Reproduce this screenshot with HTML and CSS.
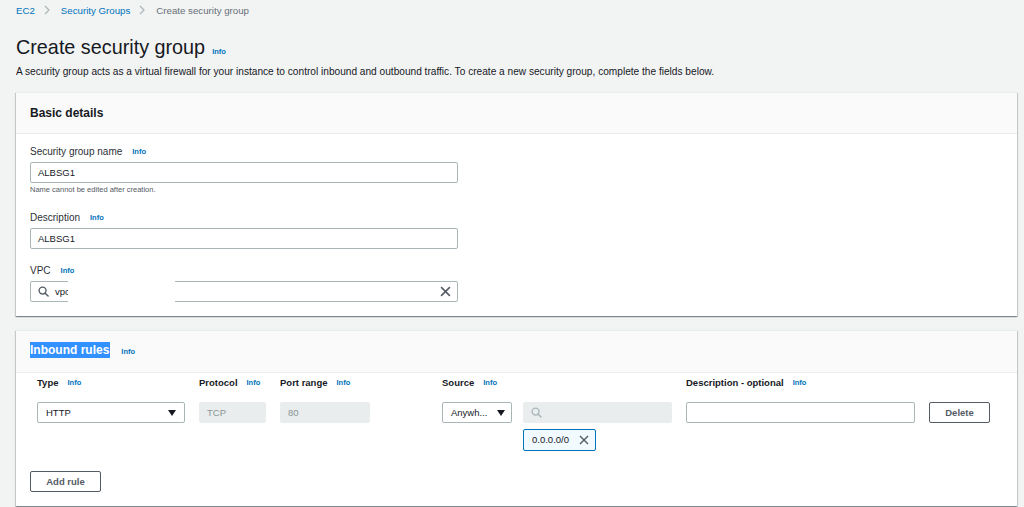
FILE: index.html
```html
<!DOCTYPE html>
<html lang="en">
<head>
<meta charset="utf-8">
<title>Create security group</title>
<link rel="stylesheet" href="styles.css">
</head>
<body>
<div class="page">
  <nav class="crumbs">
    <a class="crumb-link">EC2</a>
    <svg class="chev" width="6" height="10" viewBox="0 0 6 10"><path d="M1 1l4 4-4 4" fill="none" stroke="#aab7b8" stroke-width="1.2"/></svg>
    <a class="crumb-link">Security Groups</a>
    <svg class="chev" width="6" height="10" viewBox="0 0 6 10"><path d="M1 1l4 4-4 4" fill="none" stroke="#aab7b8" stroke-width="1.2"/></svg>
    <span class="crumb-current">Create security group</span>
  </nav>

  <div class="title-row">
    <h1 class="title">Create security group</h1>
    <a class="info">Info</a>
  </div>
  <p class="intro">A security group acts as a virtual firewall for your instance to control inbound and outbound traffic. To create a new security group, complete the fields below.</p>

  <section class="card card-basic">
    <header class="card-head">
      <h2 class="card-title">Basic details</h2>
    </header>
    <div class="card-body">
      <div class="field">
        <div class="label">Security group name <a class="info">Info</a></div>
        <div class="input"><span class="value">ALBSG1</span></div>
        <div class="hint">Name cannot be edited after creation.</div>
      </div>
      <div class="field">
        <div class="label">Description <a class="info">Info</a></div>
        <div class="input"><span class="value">ALBSG1</span></div>
      </div>
      <div class="field">
        <div class="label">VPC <a class="info">Info</a></div>
        <div class="input input-search">
          <svg class="search-ico" width="11" height="11" viewBox="0 0 12 12"><circle cx="5" cy="5" r="3.8" fill="none" stroke="#545b64" stroke-width="1.5"/><path d="M7.8 7.8l3.2 3.2" stroke="#545b64" stroke-width="1.6" stroke-linecap="round"/></svg>
          <span class="value">vpc</span>
          <span class="spacer"></span>
          <svg class="clear-ico" width="11" height="11" viewBox="0 0 10 10"><path d="M1 1l8 8M9 1l-8 8" stroke="#545b64" stroke-width="1.4"/></svg>
          <span class="redact"></span>
        </div>
      </div>
    </div>
  </section>

  <section class="card card-rules">
    <header class="card-head card-head-rules">
      <h2 class="card-title"><span class="selected">Inbound rules</span></h2>
      <a class="info">Info</a>
    </header>
    <div class="card-body rules-body">
      <div class="rules">
        <div class="col-label">Type <a class="info">Info</a></div>
        <div class="col-label">Protocol <a class="info">Info</a></div>
        <div class="col-label">Port range <a class="info">Info</a></div>
        <div class="col-label">Source <a class="info">Info</a></div>
        <div class="col-label"></div>
        <div class="col-label">Description - optional <a class="info">Info</a></div>
        <div class="col-label"></div>

        <div class="cell"><div class="select w-type"><span>HTTP</span><span class="caret"></span></div></div>
        <div class="cell"><div class="input disabled w-proto"><span class="value">TCP</span></div></div>
        <div class="cell"><div class="input disabled w-port"><span class="value">80</span></div></div>
        <div class="cell"><div class="select w-src"><span>Anywh...</span><span class="caret"></span></div></div>
        <div class="cell"><div class="input disabled w-cidr">
          <svg class="search-ico" width="11" height="11" viewBox="0 0 12 12"><circle cx="5" cy="5" r="3.8" fill="none" stroke="#aab7b8" stroke-width="1.5"/><path d="M7.8 7.8l3.2 3.2" stroke="#aab7b8" stroke-width="1.6" stroke-linecap="round"/></svg>
        </div></div>
        <div class="cell"><div class="input w-desc"></div></div>
        <div class="cell"><button class="btn w-del">Delete</button></div>

        <div class="cell token-cell"><div class="token">0.0.0.0/0
          <svg width="10" height="10" viewBox="0 0 10 10"><path d="M1 1l8 8M9 1l-8 8" stroke="#545b64" stroke-width="1.4"/></svg>
        </div></div>
      </div>
      <button class="btn btn-add">Add rule</button>
    </div>
  </section>
</div>
</body>
</html>
```
FILE: styles.css
```css
* { box-sizing: border-box; }
html, body { margin: 0; padding: 0; }
body {
  background: #f2f3f3;
  font-family: "Liberation Sans", Arial, sans-serif;
  color: #16191f;
  width: 1024px;
  height: 507px;
  overflow: hidden;
}
a { text-decoration: none; }
.page {
  padding: 3px 7px 0 16px;
}
.crumbs {
  display: flex;
  align-items: center;
  height: 14px;
  font-size: 9.7px;
}
.crumb-link { color: #0073bb; }
.crumb-current { color: #687078; }
.chev { margin: 0 11px 0 9px; }

.title-row {
  display: flex;
  align-items: baseline;
  margin-top: 16px;
  height: 28px;
}
.title {
  margin: 0;
  font-size: 19.8px;
  font-weight: 400;
  line-height: 28px;
  color: #16191f;
}
.title-row .info { margin-left: 7px; }
.info {
  color: #0073bb;
  font-size: 7.5px;
  font-weight: 700;
  margin-left: 8px;
  line-height: 10px;
}
.intro {
  margin: 4px 0 0 0;
  font-size: 10.15px;
  line-height: 14px;
  color: #16191f;
  white-space: nowrap;
}

.card {
  background: #fff;
  box-shadow: 0 1px 1px 0 rgba(0,28,36,.3), 1px 1px 1px 0 rgba(0,28,36,.15), -1px 1px 1px 0 rgba(0,28,36,.15);
  border-top: 1px solid #eaeded;
}
.card-basic { margin-top: 13px; }
.card-rules { margin-top: 14px; }
.card-head {
  background: #fafafa;
  border-bottom: 1px solid #eaeded;
  height: 41px;
  padding: 0 14px;
  display: flex;
  align-items: center;
}
.card-head-rules { height: 42px; padding-bottom: 2px; }
.card-title {
  margin: 0;
  font-size: 12px;
  font-weight: 700;
  color: #16191f;
  line-height: 15px;
}
.selected {
  background: #3390ff;
  color: #fff;
  padding: 1px 1px 1px 0;
}
.card-head-rules .info { margin-left: 11px; margin-top: 4px; }
.card-body {
  padding: 10px 14px 14px 14px;
}
.field + .field { margin-top: 15px; }
.label {
  display: flex;
  align-items: center;
  height: 14px;
  font-size: 10px;
  color: #2c3036;
  margin-bottom: 3.5px;
}
.label .info { margin-left: 10px; margin-top: 1px; }
.field + .field .label { margin-bottom: 3px; }
.input {
  position: relative;
  width: 428px;
  height: 21px;
  border: 1px solid #aab7b8;
  border-radius: 2px;
  background: #fff;
  display: flex;
  align-items: center;
  padding: 0 7px;
  font-size: 9.5px;
  color: #16191f;
}
.hint {
  font-size: 7.5px;
  line-height: 12px;
  margin-top: 1px;
  color: #545b64;
}
.input-search { padding: 0 6px 0 7px; }
.search-ico { margin-right: 6px; flex: none; }
.spacer { flex: 1; }
.clear-ico { margin-right: 0; }
.redact {
  position: absolute;
  left: 37px;
  top: -1px;
  width: 107px;
  height: 21px;
  background: #fff;
}

.rules-body { padding: 3px 14px 14px 14px; }
.rules {
  margin-left: 7px;
  display: grid;
  grid-template-columns: 162px 81px 162px 81px 163px 243px 60px;
  grid-template-rows: 14px 21px auto;
  row-gap: 12px;
}
.token-cell {
  grid-column: 5;
  grid-row: 3;
  margin-top: -6px;
}
.col-label {
  display: flex;
  align-items: center;
  font-size: 9.5px;
  font-weight: 700;
  height: 14px;
  color: #16191f;
  white-space: nowrap;
}
.col-label .info { margin-left: 9px; margin-top: 1px; }
.select {
  height: 21px;
  border: 1px solid #aab7b8;
  border-radius: 2px;
  background: #fff;
  display: flex;
  align-items: center;
  justify-content: space-between;
  padding: 0 8px 0 8px;
  font-size: 9.5px;
  color: #16191f;
}
.caret {
  width: 0; height: 0;
  border-left: 4px solid transparent;
  border-right: 4px solid transparent;
  border-top: 6px solid #16191f;
  margin-top: 1px;
}
.w-type { width: 148px; }
.w-src { width: 70px; padding-right: 6px; }
.input.disabled {
  background: #eaeded;
  border-color: #eaeded;
  color: #879596;
}
.w-proto { width: 67px; }
.w-port { width: 90px; }
.w-cidr { width: 149px; }
.w-desc { width: 229px; }
.btn {
  display: block;
  height: 21px;
  background: #fff;
  border: 1px solid #545b64;
  border-radius: 2px;
  font-family: "Liberation Sans", Arial, sans-serif;
  font-weight: 700;
  font-size: 9.5px;
  color: #545b64;
  padding: 0;
}
.w-del { width: 61px; }
.token {
  display: flex;
  align-items: center;
  height: 22px;
  width: 73px;
  border: 1px solid #0073bb;
  border-radius: 2px;
  background: #f1faff;
  font-size: 9.5px;
  color: #16191f;
  padding: 0 6px 0 8px;
  justify-content: space-between;
}
.btn-add {
  width: 71px;
  margin-top: 20px;
}
```
